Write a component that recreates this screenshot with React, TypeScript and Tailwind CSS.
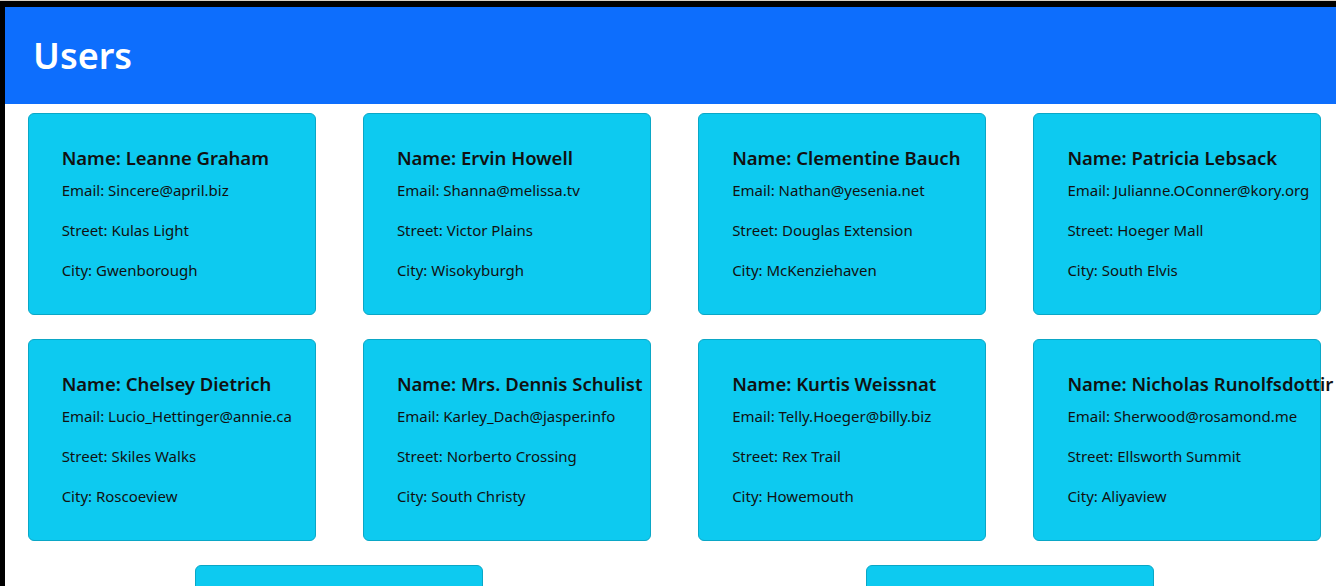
import React from 'react'

type User = {
  name: string
  email: string
  street: string
  city: string
}

const users: User[] = [
  { name: 'Leanne Graham', email: 'Sincere@april.biz', street: 'Kulas Light', city: 'Gwenborough' },
  { name: 'Ervin Howell', email: 'Shanna@melissa.tv', street: 'Victor Plains', city: 'Wisokyburgh' },
  { name: 'Clementine Bauch', email: 'Nathan@yesenia.net', street: 'Douglas Extension', city: 'McKenziehaven' },
  { name: 'Patricia Lebsack', email: 'Julianne.OConner@kory.org', street: 'Hoeger Mall', city: 'South Elvis' },
  { name: 'Chelsey Dietrich', email: 'Lucio_Hettinger@annie.ca', street: 'Skiles Walks', city: 'Roscoeview' },
  { name: 'Mrs. Dennis Schulist', email: 'Karley_Dach@jasper.info', street: 'Norberto Crossing', city: 'South Christy' },
  { name: 'Kurtis Weissnat', email: 'Telly.Hoeger@billy.biz', street: 'Rex Trail', city: 'Howemouth' },
  { name: 'Nicholas Runolfsdottir V', email: 'Sherwood@rosamond.me', street: 'Ellsworth Summit', city: 'Aliyaview' },
  { name: 'Glenna Reichert', email: 'Chaim_McDermott@dana.io', street: 'Dayna Park', city: 'Bartholomebury' },
  { name: 'Clementina DuBuque', email: 'Rey.Padberg@karina.biz', street: 'Kattie Turnpike', city: 'Lebsackbury' },
]

const UserCard = ({ user }: { user: User }) => (
  <div className="w-[288px] h-[202px] shrink-0 bg-[#0dcaf0] border border-[#0aa7c6] rounded-md pl-[33px] pr-8 pt-8 pb-8 text-[#111] whitespace-nowrap">
    <h5 className="text-[18.5px] leading-[24px] font-semibold mb-2">Name: {user.name}</h5>
    <p className="text-[15px] leading-[24px] mb-4">Email: {user.email}</p>
    <p className="text-[15px] leading-[24px] mb-4">Street: {user.street}</p>
    <p className="text-[15px] leading-[24px]">City: {user.city}</p>
  </div>
)

const App = () => {
  return (
    <div className="w-[1336px] h-[586px] overflow-hidden bg-black" style={{ fontFamily: '"Noto Sans", "Open Sans", sans-serif' }}>
      <div className="h-px bg-[#d8d0c6]" />
      <div className="pl-[5px] pt-[6px]">
        <div className="w-[1340px] h-[579px] bg-white">
          {/* Header */}
          <div className="h-[97px] bg-[#0d6efd] flex items-center pl-[28px]">
            <h1 className="text-white text-[36px] leading-[48px] font-semibold">Users</h1>
          </div>

          {/* Cards */}
          <div className="flex flex-wrap justify-around gap-y-6 pt-[9px] -ml-px">
            {users.map((u) => (
              <UserCard key={u.email} user={u} />
            ))}
          </div>
        </div>
      </div>
    </div>
  )
}

export default App
